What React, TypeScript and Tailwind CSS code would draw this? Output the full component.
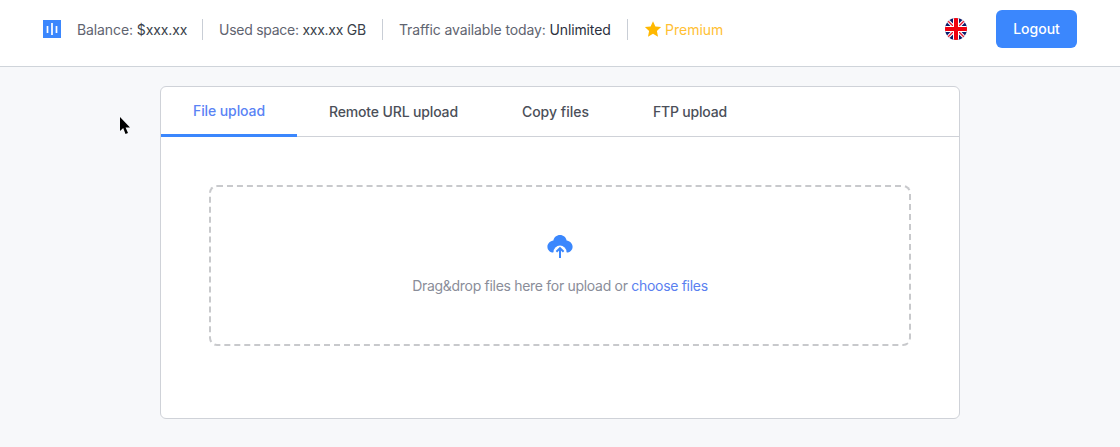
const font = { fontFamily: 'Inter, "Noto Sans", sans-serif' }

const tabs = [
  { label: 'File upload', className: 'tracking-[-0.1px] text-[#5a83f5] border-b-[3px] border-[#3b87fd] -mb-px' },
  { label: 'Remote URL upload', className: 'tracking-[-0.15px] text-[#4b4f59]' },
  { label: 'Copy files', className: 'tracking-[0px] text-[#4b4f59]' },
  { label: 'FTP upload', className: 'tracking-[-0.2px] text-[#4b4f59]' },
]

function Flag() {
  return (
    <svg width="22" height="22" viewBox="0 0 22 22" className="shrink-0">
      <defs>
        <clipPath id="flag-circle">
          <circle cx="11" cy="11" r="11" />
        </clipPath>
      </defs>
      <g clipPath="url(#flag-circle)">
        <rect width="22" height="22" fill="#0a1a6b" />
        <path d="M0 0L22 22M22 0L0 22" stroke="#fff" strokeWidth="3.600" />
        <path d="M0 0L22 22M22 0L0 22" stroke="#e8112d" strokeWidth="1.300" />
        <path d="M11 0V22M0 11H22" stroke="#fff" strokeWidth="6" />
        <path d="M11 0V22M0 11H22" stroke="#f0000f" strokeWidth="4" />
      </g>
    </svg>
  )
}

function Divider() {
  return <span className="h-[21px] w-px bg-[#c9ced6]" />
}

export default function App() {
  return (
    <div className="relative h-[447px] w-[1120px] overflow-hidden bg-[#f7f8fa]" style={font}>
      <header className="flex h-[67px] items-center border-b border-[#cfd4da] bg-white pb-[8px] pl-[43px] pr-[43px]">
        <svg width="18" height="18" viewBox="0 0 18 18" className="mr-4 shrink-0">
          <rect width="18" height="18" fill="#3b87fd" />
          <path d="M4.500 6V13M9 3V15M13.500 6V13" stroke="#fff" strokeWidth="1.700" />
        </svg>
        <div className="flex items-center text-sm text-[#5f6470]">
          <span className="w-[110px] whitespace-nowrap pt-[2px] tracking-[-0.1px]">
            Balance: <span className="text-[#3a3f4b]">$xxx.xx</span>
          </span>
          <span className="ml-[15px] mr-4 flex"><Divider /></span>
          <span className="w-[147px] whitespace-nowrap pt-[2px] tracking-[-0.26px]">
            Used space: <span className="text-[#3a3f4b]">xxx.xx GB</span>
          </span>
          <span className="mx-4 flex"><Divider /></span>
          <span className="w-[212px] whitespace-nowrap pt-[2px] tracking-[-0.12px]">
            Traffic available today: <span className="text-[#2c3140]">Unlimited</span>
          </span>
          <span className="mx-4 flex"><Divider /></span>
          <span className="flex items-center gap-[3px] pt-[2px] text-[#ffc033]">
            <svg width="18" height="18" viewBox="0 0 24 24" fill="#ffb800" className="-mt-[2px]">
              <path d="M12 1.500l3.200 7 7.600.9-5.600 5.200 1.500 7.600L12 18.400l-6.700 3.800 1.500-7.600L1.200 9.400l7.600-.9z" />
            </svg>
            Premium
          </span>
        </div>
        <div className="ml-auto flex items-center">
          <Flag />
          <button className="ml-[29px] h-[38px] w-[81px] rounded-md bg-[#3b87fd] text-sm font-medium text-white">
            Logout
          </button>
        </div>
      </header>

      <main className="mx-auto mt-[19px] h-[333px] w-[800px] rounded-md border border-[#cfd2d8] bg-white">
        <div className="flex h-[50px] border-b border-[#cfd2d8]">
          {tabs.map((tab) => (
            <div key={tab.label} className={`flex items-center px-8 text-sm font-medium ${tab.className}`}>
              {tab.label}
            </div>
          ))}
        </div>
        <div className="ml-[48px] mt-[48px] flex h-[161px] w-[702px] flex-col items-center rounded-lg border-2 border-dashed border-[#c8c9cc] pt-[47px]">
          <svg width="26" height="24" viewBox="0 0 26 24" fill="none">
            <path
              d="M13 1c3.400 0 6 2.300 6.600 5.400 3.100.4 6 2.900 6 6.300 0 3.500-2.800 5.800-6.100 5.800H6.500C3.200 18.500.4 16.200.4 12.700c0-3.400 2.900-5.900 6-6.300C7 3.300 9.600 1 13 1z"
              fill="#3b87fd"
            />
            <circle cx="13" cy="18" r="6.500" fill="#fff" />
            <rect x="6" y="18.500" width="14" height="6" fill="#fff" />
            <path d="M13 24V14.200M9.400 17.800l3.600-3.600 3.600 3.600" stroke="#3b87fd" strokeWidth="2" />
          </svg>
          <p className="mt-[18px] text-sm tracking-[-0.3px] text-[#8a8d99]">
            Drag&amp;drop files here for upload or <span className="text-[#5a7ff0]">choose files</span>
          </p>
        </div>
      </main>

      <svg width="12" height="19" viewBox="0 0 12 19" className="absolute left-[119px] top-[117px]">
        <path d="M1 0V14L4.200 11L6.500 17L9 16L6.600 10.500H11z" fill="#000" />
      </svg>
    </div>
  )
}
